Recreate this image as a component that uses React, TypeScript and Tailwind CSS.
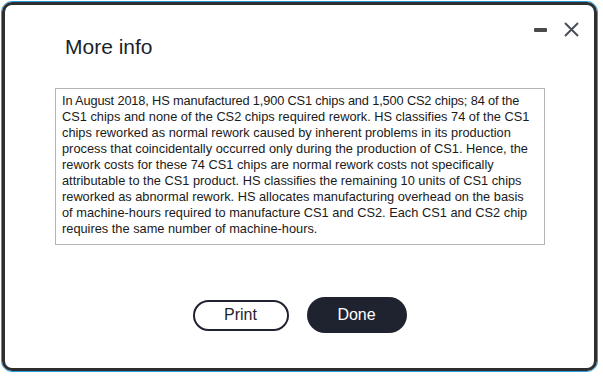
const INFO_LINES = [
  "In August 2018, HS manufactured 1,900 CS1 chips and 1,500 CS2 chips; 84 of the",
  "CS1 chips and none of the CS2 chips required rework. HS classifies 74 of the CS1",
  "chips reworked as normal rework caused by inherent problems in its production",
  "process that coincidentally occurred only during the production of CS1. Hence, the",
  "rework costs for these 74 CS1 chips are normal rework costs not specifically",
  "attributable to the CS1 product. HS classifies the remaining 10 units of CS1 chips",
  "reworked as abnormal rework. HS allocates manufacturing overhead on the basis",
  "of machine-hours required to manufacture CS1 and CS2. Each CS1 and CS2 chip",
  "requires the same number of machine-hours.",
];

export default function App() {
  return (
    <div className="w-[603px] h-[380px] bg-white pl-[1px] pt-[1px] font-['Liberation_Sans',Arial,sans-serif]">
      <div className="w-[597px] h-[371px] rounded-[11px] border border-[#2a9fe0]">
        <div className="relative h-full rounded-[10px] border-[3px] border-[#2e2e2e] bg-white">
          {/* window controls */}
          <div className="absolute right-[15px] top-[17px] flex items-center gap-[17px]">
            <span className="block w-[13px] h-[4px] rounded-[1px] bg-[#4a4a4a]" />
            <svg width="15" height="15" viewBox="0 0 15 15" fill="none">
              <path d="M1 1L14 14M14 1L1 14" stroke="#4a4f5a" strokeWidth="2" />
            </svg>
          </div>

          <div className="flex flex-col pt-[29px]">
            <h2 className="ml-[60px] text-[21px] leading-[25px] text-[#1c1f2a]">More info</h2>

            <div className="ml-[50px] mt-[29px] w-[490px] border border-[#b4b4b4] pl-[6px] pr-[2px] pt-[4px] pb-[7px]">
              <p className="text-[12.8px] leading-[16px] text-[#1a1a1a] whitespace-nowrap">
                {INFO_LINES.map((line, i) => (
                  <span key={line} className={i === 0 ? "block tracking-[-0.15px]" : "block"}>
                    {line}
                  </span>
                ))}
              </p>
            </div>

            <div className="mt-[52px] flex justify-center items-center gap-[18px]">
              <button className="w-[96px] h-[31px] rounded-full border-2 border-[#1f2330] text-[16px] text-[#1f2330]">
                Print
              </button>
              <button className="w-[100px] h-[36px] rounded-full bg-[#1f2330] text-[16px] text-white">
                Done
              </button>
            </div>
          </div>
        </div>
      </div>
    </div>
  );
}
